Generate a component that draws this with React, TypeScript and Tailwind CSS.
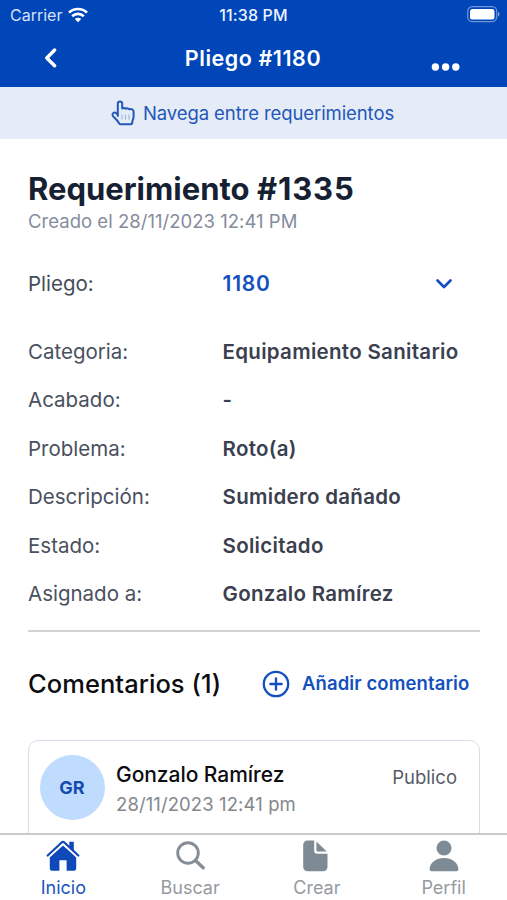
import type { ReactNode } from "react";

const details = [
  { label: "Categoria:", value: "Equipamiento Sanitario" },
  { label: "Acabado:", value: "-" },
  { label: "Problema:", value: "Roto(a)" },
  { label: "Descripción:", value: "Sumidero dañado" },
  { label: "Estado:", value: "Solicitado" },
  { label: "Asignado a:", value: "Gonzalo Ramírez" },
];

function StatusBar() {
  return (
    <div className="grid h-[30px] grid-cols-3 items-center pr-[7px] pl-[10px]">
      <div className="flex items-center gap-[6px] text-[16px] text-[#d5e1f5]">
        <span>Carrier</span>
        <svg className="-mt-px" width="20" height="16" viewBox="0 0 20 16" fill="none" stroke="#fff" strokeWidth="2.7">
          <path d="M1 5.600a13 13 0 0 1 18 0" />
          <path d="M4.200 9.200a8.400 8.400 0 0 1 11.600 0" />
          <path d="M10 15.200 6.800 12a4.600 4.600 0 0 1 6.400 0Z" fill="#fff" stroke="none" />
        </svg>
      </div>
      <span className="-ml-[3px] text-center text-[16px] font-medium tracking-[0.15px] whitespace-nowrap text-[#eef4ff]">11:38 PM</span>
      <svg className="-mt-[2px] justify-self-end" width="33" height="17" viewBox="0 0 33 17">
        <rect x="0.7" y="0.7" width="29" height="15" rx="4.6" fill="none" stroke="#6f95d8" strokeWidth="1.2" />
        <rect x="3" y="3" width="24.5" height="10.5" rx="2.6" fill="#fff" />
        <path d="M31 6v4.600c1-.3 1.500-1.200 1.500-2.300S32 6.300 31 6Z" fill="#7fa2dc" />
      </svg>
    </div>
  );
}

function Header() {
  return (
    <header className="h-[87px] shrink-0 bg-[#0046b9] text-white">
      <StatusBar />
      <div className="grid h-[57px] grid-cols-3 items-center pr-[47px] pl-[44px]">
        <svg className="-mt-[3px]" width="14" height="22" viewBox="0 0 14 22" fill="none" stroke="#fff" strokeWidth="3.4" strokeLinecap="round" strokeLinejoin="round">
          <path d="M10.600 4 2.800 12l7.800 7.800" />
        </svg>
        <h2 className="-mt-px ml-[2px] justify-self-center text-[21.500px] font-semibold tracking-[0.55px] whitespace-nowrap">Pliego #1180</h2>
        <svg className="mt-[16px] justify-self-end" width="29" height="8" viewBox="0 0 29 8" fill="#fff">
          <circle cx="4.400" cy="4" r="3.700" />
          <circle cx="14.600" cy="4" r="3.700" />
          <circle cx="24.800" cy="4" r="3.700" />
        </svg>
      </div>
    </header>
  );
}

function Banner() {
  return (
    <div className="flex h-[52px] shrink-0 items-center justify-center gap-[8px] bg-[#e5ecf7] pt-px pr-[2px] text-[#2357b8]">
      <svg className="-mt-px" width="24" height="26" viewBox="0 0 24 26" fill="none" stroke="#2357b8" strokeWidth="2" strokeLinecap="round" strokeLinejoin="round">
        <path d="M6.800 16V3.600a2.200 2.200 0 0 1 4.400 0V8.500c1-.8 2.600-.7 3.300.3 1.200-.8 2.900-.5 3.500.5 2.200-.6 4.600.2 4.600 2.500v5.300c0 1.800-1.300 3-1.300 4.600v.5c0 1.300-.7 2-1.700 2H9.800c-1 0-1.700-.6-2-1.400C6.500 20.600 5 19.300 3.200 17.500c-1.700-1.500-1.800-2.300-1.700-3 .2-2 2.200-2.500 3.700-1.300l1.600 1.500" />
        <path d="M11 15v4.200M14.500 15v4.200M18 15v4.200" strokeWidth="1" opacity="0.4" />
      </svg>
      <span className="text-[18.500px] tracking-[-0.09px] whitespace-nowrap">Navega entre requerimientos</span>
    </div>
  );
}

function Tab({ label, active, children }: { label: string; active?: boolean; children: ReactNode }) {
  return (
    <div className={active ? "flex flex-1 flex-col items-center text-[#1b55bd]" : "flex flex-1 flex-col items-center text-[#959a9f]"}>
      <div className="flex h-[37px] shrink-0 items-center">{children}</div>
      <span className="shrink-0 text-[18px] leading-[28px]">{label}</span>
    </div>
  );
}

export default function App() {
  return (
    <div className="flex h-[900px] w-[507px] flex-col overflow-hidden bg-white font-['Inter','Liberation_Sans',sans-serif]">
      <Header />
      <Banner />
      <main className="min-h-0 flex-1 overflow-hidden pt-[31px] pr-[27px] pl-[28px]">
        <h1 className="text-[31px] leading-[38px] font-bold whitespace-nowrap text-[#171f33]">
          Requerimiento <span className="tracking-[0.9px]">#1335</span>
        </h1>
        <p className="text-[18.500px] leading-[26px] tracking-[0.03px] text-[#858c9c]">Creado el 28/11/2023 12:41 PM</p>
        <div className="mt-[26px] flex h-[48px] items-center">
          <span className="w-[194.500px] text-[20.500px] text-[#454c59]">Pliego:</span>
          <span className="flex-1 text-[21px] font-semibold tracking-[0.8px] text-[#1450bd]">1180</span>
          <svg className="mr-[27px]" width="18" height="12" viewBox="0 0 18 12" fill="none" stroke="#1450bd" strokeWidth="2.700" strokeLinecap="round" strokeLinejoin="round">
            <path d="m2.500 2.500 6.500 6.500 6.500-6.500" />
          </svg>
        </div>
        <dl className="mt-[20px] text-[20.500px]">
          {details.map((d) => (
            <div key={d.label} className="flex h-[48.500px] items-center">
              <dt className="w-[194.500px] text-[#4a505e]">{d.label}</dt>
              <dd className="font-semibold tracking-[0.3px] whitespace-nowrap text-[#3b404f]">{d.value}</dd>
            </div>
          ))}
        </dl>
        <div className="mt-[11px] h-[2px] bg-[#d2d3d7]" />
        <div className="mt-[28px] flex h-[48px] items-center">
          <h3 className="w-[234px] text-[25.500px] font-medium tracking-[0.05px] whitespace-nowrap text-[#0c0d10]">Comentarios (1)</h3>
          <svg className="-mt-px" width="28" height="28" viewBox="0 0 28 28" fill="none" stroke="#1450bd" strokeWidth="2.300" strokeLinecap="round">
            <circle cx="14" cy="14" r="12.200" />
            <path d="M14 8.300v11.400M8.300 14h11.400" />
          </svg>
          <span className="ml-[12px] text-[18.500px] font-semibold tracking-[0.1px] whitespace-nowrap text-[#1450bd]">Añadir comentario</span>
        </div>
        <section className="mt-[32px] flex h-[160px] rounded-[10px] border-[1.500px] border-[#d9dbe8] pt-[14px] pr-[22px] pl-[11px]">
          <div className="flex size-[65px] items-center justify-center rounded-full bg-[#bfdcff] pr-px text-[18px] font-bold text-[#174bb0]">GR</div>
          <div className="ml-[11px] flex-1 pt-[5px]">
            <div className="text-[21px] leading-[30px] font-medium tracking-[-0.05px] whitespace-nowrap text-[#0c0d10]">Gonzalo Ramírez</div>
            <div className="text-[18.500px] leading-[28px] tracking-[0.1px] whitespace-nowrap text-[#85878c]">28/11/2023 12:41 pm</div>
          </div>
          <span className="pt-[8px] text-[18.500px] leading-[28px] text-[#565c66]">Publico</span>
        </section>
      </main>
      <nav className="flex h-[67px] shrink-0 border-t-2 border-[#c9cace] bg-white pt-[2px]">
        <Tab label="Inicio" active>
          <svg width="34" height="32" viewBox="0 0 34 32" fill="#0f48b8">
            <path d="M17 5.600 3.800 17v11.500A2.300 2.300 0 0 0 6 30.800h7.400V20.300h7.200v10.500H28a2.300 2.300 0 0 0 2.200-2.300V17Z" />
            <path d="m1.700 17.200 13.800-12.800a2.200 2.200 0 0 1 3 0l13.800 12.800" fill="none" stroke="#fff" strokeWidth="3.200" />
            <path d="M23.300 1.800h4.500v10.500l-4.500-4.200Z" />
            <path d="m1.700 15.500 13.900-13a2.100 2.100 0 0 1 2.800 0l13.900 13" fill="none" stroke="#0f48b8" strokeWidth="2.200" strokeLinecap="round" />
          </svg>
        </Tab>
        <Tab label="Buscar">
          <svg width="29" height="29" viewBox="0 0 29 29" fill="none" stroke="#858e97">
            <circle cx="12" cy="12" r="10.300" strokeWidth="2.900" />
            <path d="m19.500 19.500 7.700 7.300" strokeWidth="3.300" strokeLinecap="round" />
          </svg>
        </Tab>
        <Tab label="Crear">
          <svg className="-ml-[3px]" width="25" height="32" viewBox="0 0 25 32" fill="#7f8b94">
            <path d="M4.500 0.500h6.700v10.300a3 3 0 0 0 3 3H24.500v13.200a4.300 4.300 0 0 1-4.300 4.300H4.500A4.300 4.300 0 0 1 .2 27V4.800A4.300 4.300 0 0 1 4.500.5Z" />
            <path d="M13.400 1.600 23.700 11.500h-8.800a1.500 1.500 0 0 1-1.500-1.500Z" />
          </svg>
        </Tab>
        <Tab label="Perfil">
          <svg width="30" height="32" viewBox="0 0 30 32" fill="#7f8b94">
            <circle cx="15" cy="8" r="7.500" />
            <path d="M.6 29.300C.6 22.800 7.300 18 15 18s14.400 4.800 14.400 11.300c0 1.300-.8 2-2 2H2.600c-1.200 0-2-.7-2-2Z" />
          </svg>
        </Tab>
      </nav>
    </div>
  );
}
